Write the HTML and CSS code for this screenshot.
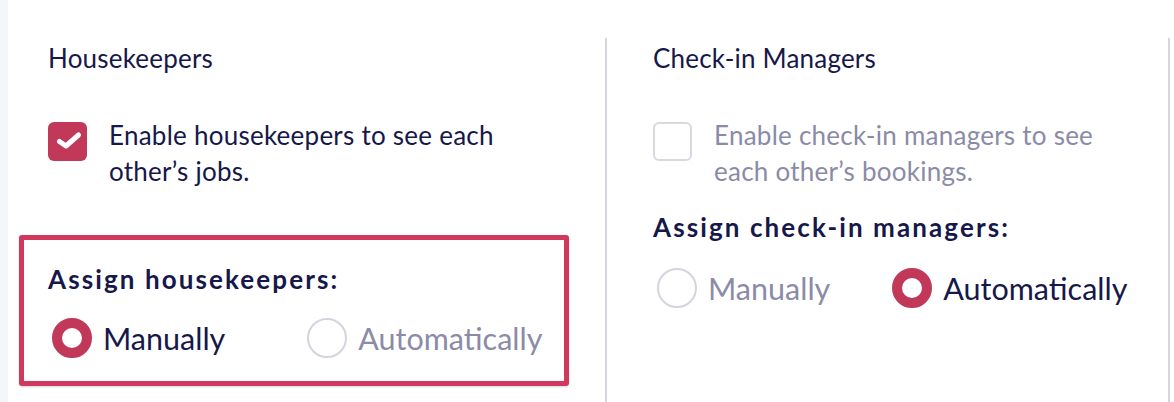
FILE: index.html
```html
<!DOCTYPE html>
<html lang="en">
<head>
<meta charset="utf-8">
<title>Team settings</title>
<link rel="stylesheet" href="styles.css">
</head>
<body>
<main class="panel">
  <section class="col col--first">
    <h2 class="col-title">Housekeepers</h2>
    <label class="check">
      <span class="check-box is-checked">
        <svg viewBox="0 0 38 38" width="38" height="38" aria-hidden="true">
          <path d="M11.5 19.5 L18 24 L30.5 13" fill="none" stroke="#fff" stroke-width="5" stroke-linecap="round" stroke-linejoin="round"/>
        </svg>
      </span>
      <span class="check-text">Enable housekeepers to see each other’s jobs.</span>
    </label>
    <div class="assign assign--boxed">
      <div class="assign-title">Assign housekeepers:</div>
      <div class="radios radios--wide">
        <span class="radio is-on"><span class="radio-dot"></span><span class="radio-text">Manually</span></span>
        <span class="radio"><span class="radio-dot"></span><span class="radio-text">Automatically</span></span>
      </div>
    </div>
  </section>
  <section class="col col--second">
    <h2 class="col-title">Check-in Managers</h2>
    <label class="check is-muted">
      <span class="check-box"></span>
      <span class="check-text">Enable check-in managers to see each other’s bookings.</span>
    </label>
    <div class="assign">
      <div class="assign-title">Assign check-in managers:</div>
      <div class="radios">
        <span class="radio"><span class="radio-dot"></span><span class="radio-text">Manually</span></span>
        <span class="radio is-on"><span class="radio-dot"></span><span class="radio-text">Automatically</span></span>
      </div>
    </div>
  </section>
  <section class="col col--third"></section>
</main>
</body>
</html>
```

FILE: styles.css
```css
html, body {
  margin: 0;
  height: 100%;
}

body {
  background: #f5f6f8;
  font-family: "Lato", "Open Sans", sans-serif;
  color: #16184a;
  overflow: hidden;
}

.panel {
  margin-left: 8px;
  height: 402px;
  background: #fff;
  display: flex;
  align-items: flex-start;
}

.col {
  box-sizing: border-box;
  margin-top: 38px;
  height: 364px;
}

.col + .col {
  border-left: 2px solid #d4d7df;
}

.col--first {
  width: 597px;
  padding-left: 40px;
}

.col--second {
  width: 563px;
  padding-left: 46px;
}

.col--third {
  flex: 1;
}

.col-title {
  margin: 4px 0 0;
  font-size: 26px;
  line-height: 32px;
  font-weight: 400;
  letter-spacing: 0.2px;
  color: #16184a;
}

/* checkbox row */
.check {
  display: flex;
  align-items: flex-start;
  margin-top: 43px;
}

.check-box {
  flex: none;
  box-sizing: border-box;
  width: 39px;
  height: 39px;
  margin-top: 5px;
  margin-right: 22px;
  border-radius: 6px;
  border: 2px solid #d6d9e0;
  background: #fff;
}

.check-box.is-checked {
  border: none;
  background: #c13859;
}

.check-box svg {
  display: block;
}

.check-text {
  width: 400px;
  font-size: 26px;
  line-height: 36px;
  letter-spacing: 0.25px;
  color: #16184a;
}

.check.is-muted .check-text {
  color: #8b8ba8;
}

/* assignment group */
.assign {
  margin-top: 22px;
}

.assign--boxed {
  margin: 46px 0 0 -29px;
  width: 550px;
  box-sizing: border-box;
  padding: 23px 24px 23px;
  border: 5px solid #d0385e;
  border-radius: 3px;
  box-shadow: 0 1px 2px rgba(22, 24, 74, 0.18);
}

.assign-title {
  font-size: 26px;
  line-height: 32px;
  font-weight: 700;
  letter-spacing: 2.1px;
  color: #16184a;
}

.radios {
  display: flex;
  align-items: center;
  gap: 62px;
  margin-top: 25px;
}

.radios--wide {
  gap: 82px;
  margin-top: 23px;
}

.radio {
  display: flex;
  align-items: center;
  margin-left: 4px;
}

.radio + .radio {
  margin-left: 0;
}

.radio-dot {
  box-sizing: border-box;
  width: 40px;
  height: 40px;
  border-radius: 50%;
  border: 2px solid #d3d5de;
  background: #fff;
  margin-right: 11px;
}

.radio.is-on .radio-dot {
  border: 10px solid #c13859;
}

.radio-text {
  font-size: 30.5px;
  line-height: 40px;
  color: #8b8ba8;
}

.radio.is-on .radio-text {
  color: #16184a;
}
```
